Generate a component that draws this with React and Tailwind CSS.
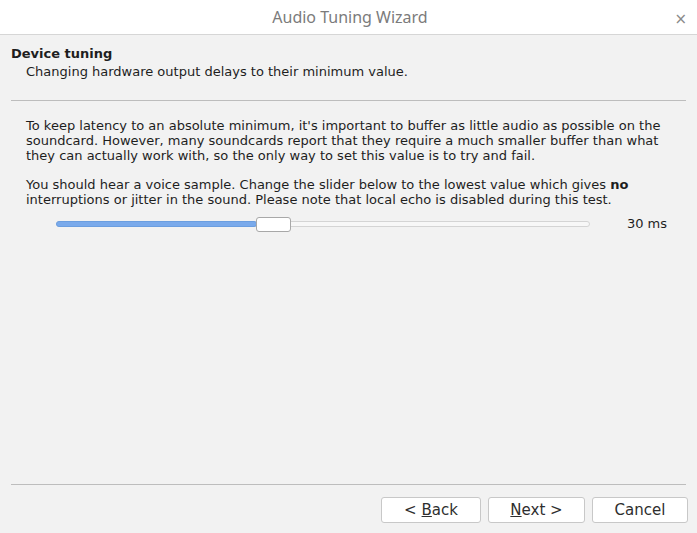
import React, { useState } from 'react';

function Button({ width, children }) {
    return (
        <button className={`${width} h-[26px] bg-white border border-[#c8c8c8] rounded-[3px] text-[15px] text-[#2e2e2e] flex items-center justify-center`}>
            {children}
        </button>
    );
}

export default function App() {
    const [value] = useState(30);

    return (
        <div className="w-[697px] h-[533px] flex flex-col bg-[#f2f2f2] text-[#1e1e1e] overflow-hidden" style={{ fontFamily: '"DejaVu Sans", sans-serif' }}>
            {/* Title bar */}
            <div className="h-[35px] shrink-0 bg-white border-b border-[#d6d6d6] relative flex items-center justify-center">
                <span className="text-[16px] text-[#7b7b7b] pl-[3px]" style={{ fontFamily: '"Noto Sans", sans-serif' }}>Audio Tuning Wizard</span>
                <span className="absolute right-[10px] top-[8px] text-[15px] text-[#8a8a8a]">×</span>
            </div>

            {/* Header */}
            <div className="px-[11px] pt-[11px]">
                <div className="text-[13px] font-bold leading-[16px]">Device tuning</div>
                <div className="text-[13px] leading-[16px] pl-[15px] mt-[2px]">Changing hardware output delays to their minimum value.</div>
            </div>
            <div className="mx-[11px] mt-[20px] border-t border-[#bdbdbd]"></div>

            {/* Content */}
            <div className="px-[26px] pt-[17px] text-[13px] leading-[15px]">
                <p>To keep latency to an absolute minimum, it's important to buffer as little audio as possible on the soundcard. However, many soundcards report that they require a much smaller buffer than what they can actually work with, so the only way to set this value is to try and fail.</p>
                <p className="mt-[14px]">You should hear a voice sample. Change the slider below to the lowest value which gives <b>no</b> interruptions or jitter in the sound. Please note that local echo is disabled during this test.</p>
                <div className="flex items-center mt-[9px] h-[15px]">
                    <div className="ml-[30px] w-[534px] h-[6px] rounded-full bg-[#f7f7f7] border border-[#d4d4d4] relative">
                        <div className="absolute left-[-1px] top-[-1px] h-[6px] w-[201px] rounded-full bg-[#7aaaeb] border border-[#6b9ee0]"></div>
                        <div className="absolute left-[199px] top-[-5px] w-[35px] h-[15px] bg-white border border-[#a8a8a8] rounded-[3px]"></div>
                    </div>
                    <span className="ml-auto mr-[4px] leading-[15px]">{value} ms</span>
                </div>
            </div>

            <div className="flex-1"></div>

            {/* Footer */}
            <div className="mx-[11px] border-t border-[#bdbdbd]"></div>
            <div className="flex justify-end gap-[7px] px-[9px] pt-[12px] pb-[10px]">
                <Button width="w-[100px]">&lt; <span className="underline ml-[5px]">B</span>ack</Button>
                <Button width="w-[97px]"><span className="underline">N</span>ext &gt;</Button>
                <Button width="w-[96px]">Cancel</Button>
            </div>
        </div>
    );
}
